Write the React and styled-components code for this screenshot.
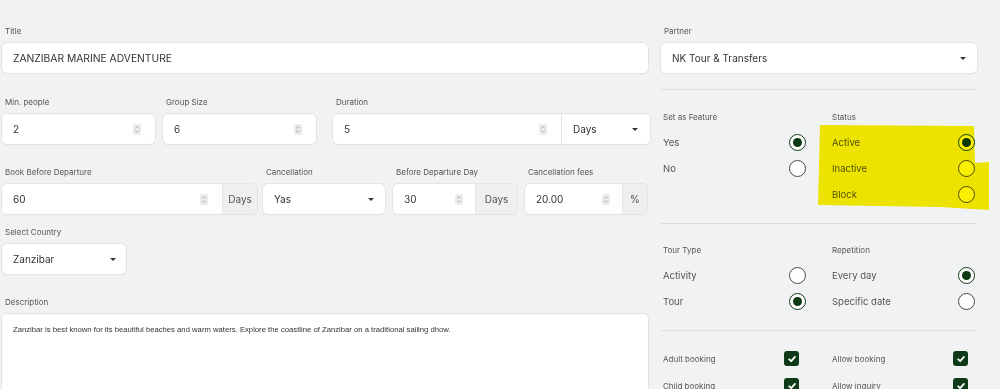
import React from 'react';
import styled, { createGlobalStyle } from 'styled-components';

const GlobalStyle = createGlobalStyle`
  html, body {
    margin: 0;
    background: #f1f2f4;
  }
  body {
    font-family: Inter, "Noto Sans", sans-serif;
    color: #333;
  }
`;

const Page = styled.div`
  position: relative;
  display: flex;
  align-items: flex-start;
  gap: 11px;
  padding: 26px 0 0 2px;
  height: 389px;
  box-sizing: border-box;
  overflow: hidden;
`;

const LeftCol = styled.div`
  width: 648px;
  display: flex;
  flex-direction: column;
  & > * {
    flex-shrink: 0;
  }
`;

const RightCol = styled.div`
  width: 316px;
  display: flex;
  flex-direction: column;
  & > * {
    flex-shrink: 0;
  }
`;

const Row = styled.div`
  display: flex;
  margin-bottom: ${p => p.$mb || 0}px;
`;

const Field = styled.div`
  display: flex;
  flex-direction: column;
  width: ${p => (p.$w ? `${p.$w}px` : 'auto')};
  flex: ${p => (p.$w ? 'none' : 1)};
  margin-left: ${p => p.$ml || 0}px;
  margin-bottom: ${p => p.$mb || 0}px;
`;

const Label = styled.div`
  font-size: 8px;
  line-height: 10px;
  color: #555;
  margin-bottom: 7px;
  padding-left: 3px;
`;

const Box = styled.div`
  display: flex;
  align-items: center;
  height: 30px;
  background: #fff;
  border-radius: 5px;
  box-shadow: 0 0 0 1px #e3e4e7, 0 1px 2px rgba(0, 0, 0, 0.05);
  overflow: hidden;
  margin-right: ${p => p.$mr || 0}px;
`;

const Value = styled.div`
  flex: 1;
  padding: 0 11px;
  font-size: ${p => p.$fs || 10}px;
  color: #333;
  white-space: nowrap;
`;

const SpinBox = styled.div`
  width: 8px;
  height: 11px;
  margin-right: ${p => p.$mr || 11}px;
  background: #ebecee;
  border-radius: 1px;
  display: flex;
  align-items: center;
  justify-content: center;
`;

const Spinner = ({ mr }) => (
  <SpinBox $mr={mr}>
    <svg width="6" height="9" viewBox="0 0 6 9" fill="none" stroke="#9a9ca0" strokeWidth="0.8">
      <path d="M1.2 3.4 L3 1.6 L4.8 3.4" />
      <path d="M1.2 5.6 L3 7.4 L4.8 5.6" />
    </svg>
  </SpinBox>
);

const Addon = styled.div`
  align-self: stretch;
  display: flex;
  align-items: center;
  justify-content: center;
  width: ${p => p.$w}px;
  background: ${p => (p.$white ? '#fff' : '#eeeff1')};
  border-left: 1px solid #e3e4e7;
  font-size: 10px;
  color: #555;
  box-sizing: border-box;
`;

const Caret = styled.span`
  width: 0;
  height: 0;
  border-left: 3px solid transparent;
  border-right: 3px solid transparent;
  border-top: 3px solid #333;
  margin-right: ${p => p.$mr || 12}px;
`;

const Textarea = styled.div`
  height: 90px;
  background: #fff;
  border-radius: 5px;
  box-shadow: 0 0 0 1px #e3e4e7, 0 1px 2px rgba(0, 0, 0, 0.05);
  padding: 10px 11px;
  font-family: "Liberation Sans", Arial, sans-serif;
  font-size: 7.7px;
  line-height: 12px;
  color: #333;
  margin-right: 2px;
`;

const Divider = styled.div`
  height: 1px;
  background: #dcdde0;
`;

const Section = styled.div`
  display: grid;
  grid-template-columns: 145px 145px;
  column-gap: 24px;
  padding: ${p => p.$pt}px 0 ${p => p.$pb}px;
`;

const Group = styled.div`
  display: flex;
  flex-direction: column;
`;

const GroupTitle = styled.div`
  font-size: 8px;
  line-height: 10px;
  color: #555;
  padding-left: 2px;
  margin-bottom: 7px;
`;

const OptionRow = styled.div`
  display: flex;
  align-items: center;
  justify-content: space-between;
  height: ${p => p.$h || 26}px;
  padding-left: 2px;
  font-size: ${p => (p.$small ? 8 : 9.5)}px;
  color: #555;
`;

const Radio = styled.span`
  width: 17px;
  height: 17px;
  border-radius: 50%;
  box-sizing: border-box;
  border: ${p => (p.$on ? '1.8px solid #0b3a13' : '1.2px solid #4a4a4a')};
  background: #fff;
  display: flex;
  align-items: center;
  justify-content: center;
  &::after {
    content: '';
    width: 9px;
    height: 9px;
    border-radius: 50%;
    background: ${p => (p.$on ? '#0b3a13' : 'transparent')};
  }
`;

const CheckBox = styled.span`
  width: 15px;
  height: 15px;
  border-radius: 3px;
  background: #0e3a17;
  margin-right: 7px;
  display: flex;
  align-items: center;
  justify-content: center;
`;

const Check = () => (
  <CheckBox>
    <svg width="10" height="10" viewBox="0 0 10 10" fill="none" stroke="#fff" strokeWidth="1.8" strokeLinecap="round" strokeLinejoin="round">
      <path d="M2.2 5.3 L4.2 7.2 L7.9 2.9" />
    </svg>
  </CheckBox>
);

const Highlight = styled.svg`
  position: absolute;
  left: 816px;
  top: 123px;
  mix-blend-mode: multiply;
  pointer-events: none;
`;

const RadioGroup = ({ title, options }) => (
  <Group>
    <GroupTitle>{title}</GroupTitle>
    {options.map(o => (
      <OptionRow key={o.label}>
        {o.label}
        <Radio $on={o.on} />
      </OptionRow>
    ))}
  </Group>
);

const CheckGroup = ({ options }) => (
  <Group>
    {options.map(o => (
      <OptionRow key={o} $h={27} $small>
        {o}
        <Check />
      </OptionRow>
    ))}
  </Group>
);

const App = () => (
  <>
    <GlobalStyle />
    <Page>
      <LeftCol>
        <Field $mb={24}>
          <Label>Title</Label>
          <Box $mr={2}>
            <Value $fs={10.3}>ZANZIBAR MARINE ADVENTURE</Value>
          </Box>
        </Field>

        <Row $mb={23}>
          <Field $w={153}>
            <Label>Min. people</Label>
            <Box>
              <Value>2</Value>
              <Spinner mr={14} />
            </Box>
          </Field>
          <Field $w={153} $ml={8}>
            <Label>Group Size</Label>
            <Box>
              <Value>6</Value>
              <Spinner mr={14} />
            </Box>
          </Field>
          <Field $ml={17}>
            <Label>Duration</Label>
            <Box>
              <Value>5</Value>
              <Spinner mr={14} />
              <Addon $w={89} $white>
                <Value>Days</Value>
                <Caret />
              </Addon>
            </Box>
          </Field>
        </Row>

        <Row $mb={13}>
          <Field $w={255}>
            <Label>Book Before Departure</Label>
            <Box>
              <Value>60</Value>
              <Spinner mr={14} />
              <Addon $w={35}>Days</Addon>
            </Box>
          </Field>
          <Field $w={122} $ml={6}>
            <Label>Cancellation</Label>
            <Box>
              <Value>Yas</Value>
              <Caret $mr={11} />
            </Box>
          </Field>
          <Field $w={124} $ml={8}>
            <Label>Before Departure Day</Label>
            <Box>
              <Value>30</Value>
              <Spinner mr={12} />
              <Addon $w={42}>Days</Addon>
            </Box>
          </Field>
          <Field $w={122} $ml={8}>
            <Label>Cancellation fees</Label>
            <Box>
              <Value>20.00</Value>
              <Spinner mr={12} />
              <Addon $w={25}>%</Addon>
            </Box>
          </Field>
        </Row>

        <Row $mb={23}>
          <Field $w={124}>
            <Label>Select Country</Label>
            <Box>
              <Value>Zanzibar</Value>
              <Caret $mr={10} />
            </Box>
          </Field>
        </Row>

        <Field>
          <Label>Description</Label>
          <Textarea>
            Zanzibar is best known for its beautiful beaches and warm waters. Explore the coastline of Zanzibar on a traditional sailing dhow.
          </Textarea>
        </Field>
      </LeftCol>

      <RightCol>
        <Field $mb={16}>
          <Label>Partner</Label>
          <Box>
            <Value>NK Tour &amp; Transfers</Value>
            <Caret $mr={11} />
          </Box>
        </Field>
        <Divider />
        <Section $pt={22} $pb={16}>
          <RadioGroup
            title="Set as Feature"
            options={[{ label: 'Yes', on: true }, { label: 'No' }]}
          />
          <RadioGroup
            title="Status"
            options={[{ label: 'Active', on: true }, { label: 'Inactive' }, { label: 'Block' }]}
          />
        </Section>
        <Divider />
        <Section $pt={21} $pb={16}>
          <RadioGroup
            title="Tour Type"
            options={[{ label: 'Activity' }, { label: 'Tour', on: true }]}
          />
          <RadioGroup
            title="Repetition"
            options={[{ label: 'Every day', on: true }, { label: 'Specific date' }]}
          />
        </Section>
        <Divider />
        <Section $pt={14} $pb={0}>
          <CheckGroup options={['Adult booking', 'Child booking']} />
          <CheckGroup options={['Allow booking', 'Allow inquiry']} />
        </Section>
      </RightCol>

      <Highlight width="176" height="90" viewBox="0 0 176 90">
        <polygon
          points="4,2 158,3 159,40 173,39 173,87 124,84 2,82"
          fill="#fbf000"
        />
      </Highlight>
    </Page>
  </>
);

export default App;
